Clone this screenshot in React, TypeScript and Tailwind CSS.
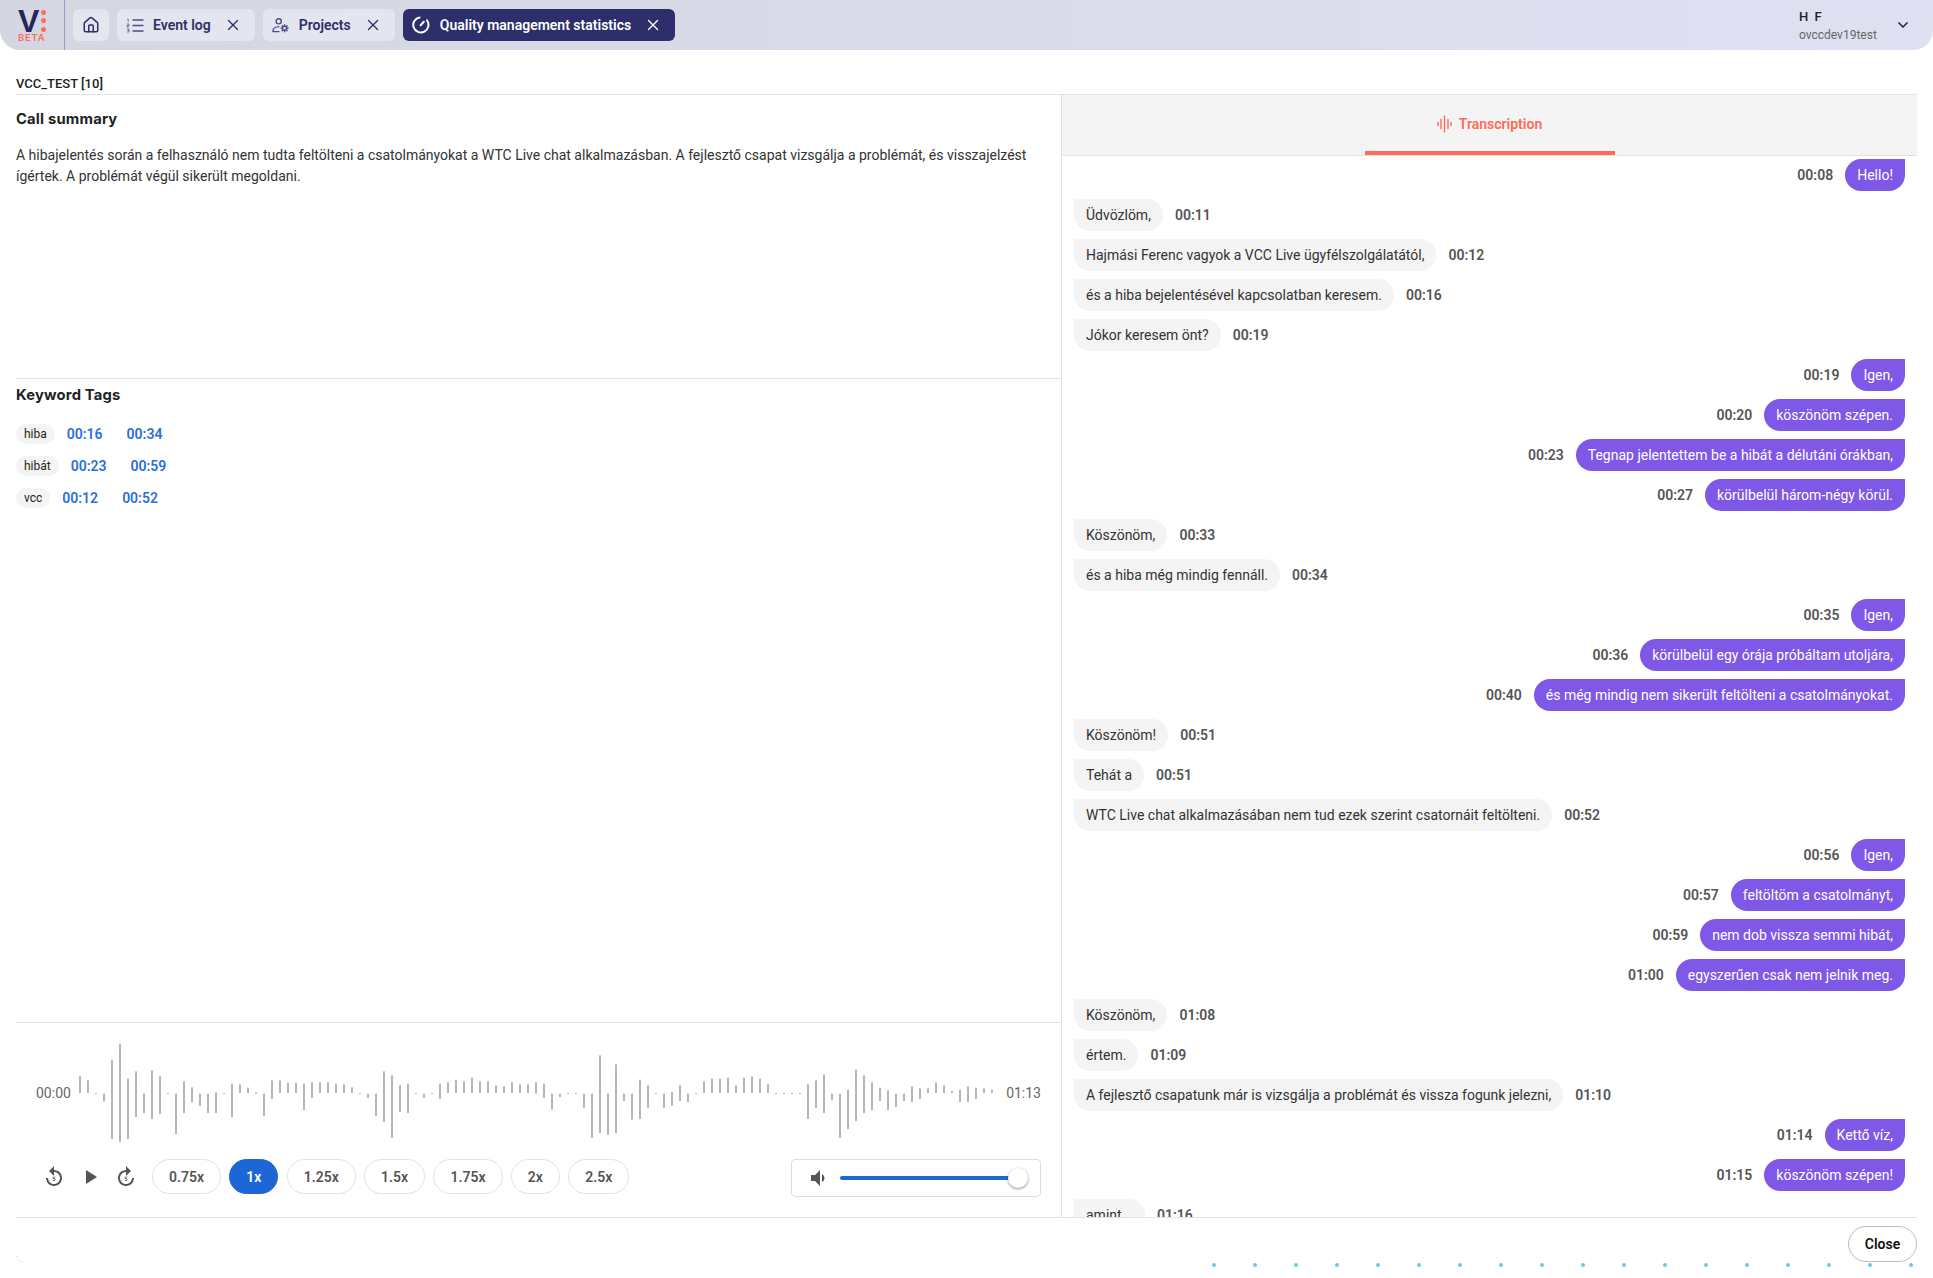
import { ChevronDown, House, X } from "lucide-react";
import { MdForward5, MdPlayArrow, MdReplay5, MdVolumeDown } from "react-icons/md";

type ChatRow = { side: "in" | "out"; text: string; time: string; bubble?: string };

const CHAT: ChatRow[] = [
  { side: "out", text: "Hello!", time: "00:08" },
  { side: "in", text: "Üdvözlöm,", time: "00:11" },
  { side: "in", text: "Hajmási Ferenc vagyok a VCC Live ügyfélszolgálatától,", time: "00:12" },
  { side: "in", text: "és a hiba bejelentésével kapcsolatban keresem.", time: "00:16" },
  { side: "in", text: "Jókor keresem önt?", time: "00:19" },
  { side: "out", text: "Igen,", time: "00:19" },
  { side: "out", text: "köszönöm szépen.", time: "00:20" },
  { side: "out", text: "Tegnap jelentettem be a hibát a délutáni órákban,", time: "00:23" },
  { side: "out", text: "körülbelül három-négy körül.", time: "00:27" },
  { side: "in", text: "Köszönöm,", time: "00:33" },
  { side: "in", text: "és a hiba még mindig fennáll.", time: "00:34" },
  { side: "out", text: "Igen,", time: "00:35" },
  { side: "out", text: "körülbelül egy órája próbáltam utoljára,", time: "00:36" },
  { side: "out", text: "és még mindig nem sikerült feltölteni a csatolmányokat.", time: "00:40" },
  { side: "in", text: "Köszönöm!", time: "00:51" },
  { side: "in", text: "Tehát a", time: "00:51" },
  { side: "in", text: "WTC Live chat alkalmazásában nem tud ezek szerint csatornáit feltölteni.", time: "00:52" },
  { side: "out", text: "Igen,", time: "00:56" },
  { side: "out", text: "feltöltöm a csatolmányt,", time: "00:57" },
  { side: "out", text: "nem dob vissza semmi hibát,", time: "00:59" },
  { side: "out", text: "egyszerűen csak nem jelnik meg.", time: "01:00" },
  { side: "in", text: "Köszönöm,", time: "01:08" },
  { side: "in", text: "értem.", time: "01:09" },
  { side: "in", text: "A fejlesztő csapatunk már is vizsgálja a problémát és vissza fogunk jelezni,", time: "01:10" },
  { side: "out", text: "Kettő víz,", time: "01:14" },
  { side: "out", text: "köszönöm szépen!", time: "01:15" },
  { side: "in", text: "amint", time: "01:16", bubble: "w-[71px]" },
];

const KEYWORDS = [
  { tag: "hiba", times: ["00:16", "00:34"] },
  { tag: "hibát", times: ["00:23", "00:59"] },
  { tag: "vcc", times: ["00:12", "00:52"] },
];

const SPEEDS = ["0.75x", "1x", "1.25x", "1.5x", "1.75x", "2x", "2.5x"];

// top / bottom of each wave bar, read off the reference at 3x (218 is the midline)
const DOT: [number, number] = [218, 220];
const BARS: [number, number][] = [
  [168, 218], [180, 218], DOT, [220, 243], [118, 356], [70, 365], [175, 356], [153, 290],
  [220, 278], [150, 296], [168, 281], DOT, [220, 341], [183, 278], [201, 245], [220, 257],
  [220, 278], [216, 278], DOT, [190, 290], [192, 218], [202, 218], [216, 220], [220, 287],
  [180, 236], [180, 218], [187, 218], [187, 218], [190, 269], [186, 233], [186, 218], [186, 218],
  [190, 218], [192, 218], [201, 218], DOT, [220, 233], [220, 287], [153, 305], [165, 353],
  [195, 275], [190, 278], DOT, [220, 233], DOT, [190, 236], [186, 218], [178, 218],
  [183, 218], [172, 218], [183, 218], [183, 218], [195, 218], [198, 218], [186, 218], [192, 218],
  [192, 218], [186, 220], [190, 233], [220, 268], [220, 230], DOT, DOT, [220, 262],
  [220, 353], [105, 338], [220, 344], [132, 338], [220, 242], [220, 298], [178, 296], [195, 262],
  DOT, [220, 262], [215, 256], [195, 242], [220, 245], DOT, [183, 218], [175, 218],
  [175, 218], [172, 218], [195, 218], [172, 218], [168, 218], [175, 218], [192, 218], DOT,
  DOT, DOT, DOT, [192, 296], [180, 263], [163, 278], [220, 240], [220, 353],
  [208, 326], [148, 302], [165, 278], [186, 269], [202, 242], [210, 269], [220, 260], [220, 242],
  [198, 245], [204, 236], [204, 218], [186, 218], [195, 218], [212, 218], [208, 245], [198, 245],
  [202, 236], [204, 218], [208, 218],
];

const Waveform = () => (
  <svg width="914" height="120" viewBox="0 0 914 120" className="shrink-0">
    {BARS.map(([top, bottom], i) => {
      const y = (top - 218) / 3 + 60;
      const height = Math.max((bottom - top) / 3, 1);
      return <rect key={i} x={8 * i} y={y} width="2" height={height} fill="#b6b6b6" />;
    })}
  </svg>
);

const EventLogIcon = () => (
  <svg width="18" height="15" viewBox="0 0 18 15" fill="none" stroke="currentColor" className="block">
    <path d="M6.5 2h11M6.5 7.5h11M6.5 13h11" strokeWidth="1.6" />
    <path d="M1.2 1h1v3M1 6h2v1.5H1V9h2M1 11h2v1.5H1.5M3 12.5V14H1" strokeWidth="0.7" />
  </svg>
);

const ProjectsIcon = () => (
  <svg width="18" height="15" viewBox="0 0 18 15" fill="none" stroke="currentColor" strokeWidth="1.4" strokeLinecap="round" className="block">
    <circle cx="6.7" cy="3.3" r="2.6" />
    <path d="M0.9 13.6c0-3 2.5-5 6-5M0.9 13.6H7" />
    <circle cx="12.6" cy="10.3" r="2" />
    <path d="M12.6 6.8v1M12.6 12.8v1M9.1 10.3h1M15.1 10.3h1M10.1 7.8l.7.7M14.4 12.1l.7.7M10.1 12.8l.7-.7M14.4 8.5l.7-.7" />
  </svg>
);

const QualityIcon = () => (
  <svg width="18" height="18" viewBox="0 0 18 18" fill="none" stroke="currentColor" strokeWidth="2" strokeLinecap="round" className="block">
    <path d="M7.6 1.4A7.6 7.6 0 1 0 15 4.4" />
    <path d="M8.6 9.2 11.8 5.8" />
  </svg>
);

const TranscriptionIcon = () => (
  <svg width="15" height="18" viewBox="0 0 15 18" stroke="#ff6b57" strokeWidth="1.4" strokeLinecap="round">
    <path d="M1 7.5v3M4 4.5v9M7.5 1v16M11 4.5v9M14 7.5v3" />
  </svg>
);

const Tab = ({ icon, label, active }: { icon: React.ReactNode; label: string; active?: boolean }) => (
  <div
    className={`flex h-8 items-center rounded-md pl-[9px] pr-[13px] text-sm font-semibold ${
      active ? "bg-[#2e2e6a] text-white" : "bg-[#e4e5ee] text-[#2e2e6a]"
    }`}
  >
    <span className={active ? "text-white" : "text-[#4b4b8c]"}>{icon}</span>
    <span className={active ? "ml-[10px]" : "ml-[9px]"}>{label}</span>
    <X className="ml-[13px]" size={18} strokeWidth={1.8} />
  </div>
);

const Heading = ({ children }: { children: React.ReactNode }) => (
  <h2 className="font-['Inter',sans-serif] text-[14.75px] font-bold tracking-[0.2px] text-[#222]">{children}</h2>
);

export default function App() {
  return (
    <div className="relative flex h-[1278px] flex-col overflow-hidden bg-white font-['Roboto',sans-serif] text-sm text-[#333]">
      {/* Top bar */}
      <header className="flex h-[50px] shrink-0 items-center rounded-b-[20px] bg-gradient-to-r from-[#d4d6e2] to-[#dfe0f2]">
        <div className="relative flex h-full w-[65px] shrink-0 border-r border-[#9b9ccb]">
          <span className="absolute left-[18px] top-[8px] font-['Liberation_Sans',sans-serif] text-[32px] font-bold leading-[26px] text-[#26265e]">V</span>
          <span className="absolute left-[41px] top-[10px] size-[5px] rounded-full bg-[#ff6b57]" />
          <span className="absolute left-[41px] top-[18px] size-[5px] rounded-full bg-[#ff6b57]" />
          <span className="absolute left-[41px] top-[27px] size-[5px] rounded-full bg-[#ff6b57]" />
          <span className="absolute left-[18px] top-[33px] font-['Inter',sans-serif] text-[9.5px] font-semibold leading-[9px] tracking-[0.8px] text-[#ff6b57]">BETA</span>
        </div>
        <div className="ml-2 flex items-center gap-2">
          <div className="flex h-8 w-9 items-center justify-center rounded-md bg-[#e4e5ee] text-[#2e2e6a]">
            <House size={18} strokeWidth={2} />
          </div>
          <Tab icon={<EventLogIcon />} label="Event log" />
          <Tab icon={<ProjectsIcon />} label="Projects" />
          <Tab icon={<QualityIcon />} label="Quality management statistics" active />
        </div>
        <div className="ml-auto flex items-center">
          <div className="w-[96px] pt-[1px]">
            <div className="text-[13px] font-medium leading-[19px] tracking-[1.5px] text-[#222]">H F</div>
            <div className="text-xs leading-[19px] text-[#666]">ovccdev19test</div>
          </div>
          <ChevronDown className="mr-[22px] text-[#26265e]" size={16} strokeWidth={2.5} />
        </div>
      </header>

      <main className="flex min-h-0 flex-1 flex-col px-4">
        <div className="flex h-[45px] shrink-0 items-end border-b border-[#e2e2e2] text-[13px] font-medium text-[#222]">
          VCC_TEST [10]
        </div>

        <div className="flex h-[1123px] shrink-0 border-b border-[#e2e2e2]">
          {/* Left column */}
          <section className="flex w-[1046px] shrink-0 flex-col border-r border-[#e2e2e2]">
            <div className="h-[284px] shrink-0 border-b border-[#e2e2e2] pt-[14px]">
              <Heading>Call summary</Heading>
              <p className="mt-[15px] leading-[21px]">
                A hibajelentés során a felhasználó nem tudta feltölteni a csatolmányokat a WTC Live chat alkalmazásban. A
                fejlesztő csapat vizsgálja a problémát, és visszajelzést
                <br />
                ígértek. A problémát végül sikerült megoldani.
              </p>
            </div>

            <div className="min-h-0 flex-1 pt-[6px]">
              <Heading>Keyword Tags</Heading>
              <div className="mt-[18px] flex flex-col gap-3">
                {KEYWORDS.map((k) => (
                  <div key={k.tag} className="flex h-5 items-center gap-3">
                    <span className="flex h-5 items-center rounded-[10px] bg-[#f4f4f4] px-2 text-xs text-[#222]">{k.tag}</span>
                    <div className="flex gap-6 font-semibold text-[#2a6fdb]">
                      {k.times.map((t) => (
                        <span key={t}>{t}</span>
                      ))}
                    </div>
                  </div>
                ))}
              </div>
            </div>

            {/* Player */}
            <div className="h-[195px] shrink-0 border-t border-[#e2e2e2] pr-[20px]">
              <div className="mt-[10px] flex h-[120px] items-center pl-[20px] text-[#666]">
                <span className="w-[43px] shrink-0">00:00</span>
                <Waveform />
                <span className="ml-auto">01:13</span>
              </div>
              <div className="mt-[6px] flex items-start pl-[26px]">
                <div className="mr-[14px] flex items-center gap-3 pt-[6px] text-[#555]">
                  <MdReplay5 size={24} />
                  <MdPlayArrow size={24} />
                  <MdForward5 size={24} />
                </div>
                <div className="flex gap-[8.3px]">
                  {SPEEDS.map((s) => (
                    <button
                      key={s}
                      className={`h-[35px] rounded-full border px-4 text-sm font-semibold ${
                        s === "1x" ? "border-[#1d66d6] bg-[#1d66d6] text-white" : "border-[#e2e2e2] bg-white text-[#555]"
                      }`}
                    >
                      {s}
                    </button>
                  ))}
                </div>
                <div className="ml-auto flex h-[38px] w-[250px] items-center rounded border border-[#ddd] pl-[14px]">
                  <MdVolumeDown className="text-[#555]" size={24} />
                  <div className="relative ml-[10px] h-1 w-[178px] rounded-full bg-[#1d66d6]">
                    <span className="absolute right-[-10px] top-[-8px] size-5 rounded-full bg-white shadow-[0_1px_3px_rgba(0,0,0,0.45)]" />
                  </div>
                </div>
              </div>
            </div>
          </section>

          {/* Transcription */}
          <section className="flex min-w-0 flex-1 flex-col">
            <div className="flex h-[61px] shrink-0 justify-center border-b border-[#e2e2e2] bg-[#f4f4f4]">
              <div className="flex h-full w-[250px] items-center justify-center gap-[7px] border-b-4 border-[#ff6b57] pt-[2px] text-sm font-semibold text-[#ff6b57]">
                <TranscriptionIcon />
                Transcription
              </div>
            </div>
            <div className="flex min-h-0 flex-1 flex-col gap-2 overflow-hidden px-3 pt-[3px]">
              {CHAT.map((row, i) =>
                row.side === "out" ? (
                  <div key={i} className="flex shrink-0 items-center justify-end gap-3">
                    <span className="font-semibold text-[#555]">{row.time}</span>
                    <span className="flex h-8 items-center rounded-2xl rounded-tr-none bg-[#7f58e7] px-3 text-white">{row.text}</span>
                  </div>
                ) : (
                  <div key={i} className="flex shrink-0 items-center gap-3">
                    <span className={`flex h-8 items-center rounded-2xl rounded-tl-none bg-[#f4f4f4] px-3 text-[#333] ${row.bubble ?? ""}`}>{row.text}</span>
                    <span className="font-semibold text-[#555]">{row.time}</span>
                  </div>
                ),
              )}
            </div>
          </section>
        </div>

        <div className="flex justify-end pt-2">
          <button className="h-9 w-[69px] rounded-full border border-[#bdbdbd] bg-white text-sm font-semibold text-[#111]">Close</button>
        </div>
      </main>

      {/* Decoration along the bottom edge */}
      <span className="absolute left-4 top-[1255px] size-2 rounded-bl-lg border-b border-l border-[#ececec]" />
      <div className="absolute right-[20px] top-[1263px] flex gap-[37px]">
        {Array.from({ length: 18 }, (_, i) => (
          <span key={i} className="size-1 rounded-full bg-[#5dd0e6]" />
        ))}
      </div>
    </div>
  );
}
